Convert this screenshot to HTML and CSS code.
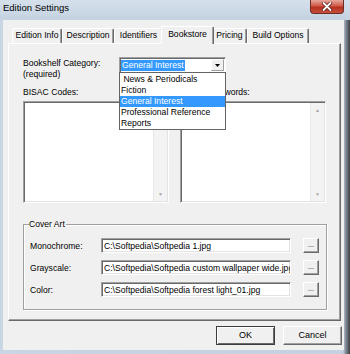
FILE: index.html
```html
<!DOCTYPE html>
<html lang="en">
<head>
    <meta charset="UTF-8">
    <title>Edition Settings</title>
    <link rel="stylesheet" href="styles.css">
</head>
<body>
    <div class="window">
        <div class="titlebar">
            <span class="title">Edition Settings</span>
            <div class="close-btn">
                <svg width="12" height="9" viewBox="0 0 12 9">
                    <path d="M2.5 1 L9.5 8 M9.5 1 L2.5 8" stroke="#5a1c14" stroke-width="3.4" stroke-linecap="round"/>
                    <path d="M2.5 1 L9.5 8 M9.5 1 L2.5 8" stroke="#fff" stroke-width="1.8" stroke-linecap="round"/>
                </svg>
            </div>
        </div>
        <div class="client">
            <div class="tabs">
                <div class="tab w-edition">Edition Info</div>
                <div class="tab w-desc">Description</div>
                <div class="tab w-ident">Identifiers</div>
                <div class="tab active w-book">Bookstore</div>
                <div class="tab w-pricing">Pricing</div>
                <div class="tab w-build">Build Options</div>
            </div>
            <div class="panel">
                <div class="category-row">
                    <div class="cat-label">Bookshelf Category:<br>(required)</div>
                    <div class="combo">
                        <div class="combo-text"><span class="sel">General Interest</span></div>
                        <div class="combo-btn">
                            <svg width="5" height="3" viewBox="0 0 5 3"><path d="M0 0 H5 L2.5 3 Z" fill="#000"/></svg>
                        </div>
                        <ul class="dropdown">
                            <li>&nbsp;News &amp; Periodicals</li>
                            <li>Fiction</li>
                            <li class="hl">General Interest</li>
                            <li>Professional Reference</li>
                            <li>Reports</li>
                        </ul>
                    </div>
                </div>
                <div class="lists">
                    <div class="list-col">
                        <div class="list-label">BISAC Codes:</div>
                        <div class="listbox">
                            <div class="list-body"></div>
                            <div class="vscroll">
                                <div class="arrow">&#9650;</div>
                                <div class="arrow">&#9660;</div>
                            </div>
                        </div>
                    </div>
                    <div class="list-col">
                        <div class="list-label">Search Keywords:</div>
                        <div class="listbox">
                            <div class="list-body"></div>
                            <div class="vscroll">
                                <div class="arrow">&#9650;</div>
                                <div class="arrow">&#9660;</div>
                            </div>
                        </div>
                    </div>
                </div>
                <fieldset class="cover">
                    <legend>Cover Art</legend>
                    <div class="file-row">
                        <div class="file-label">Monochrome:</div>
                        <div class="textbox">C:\Softpedia\Softpedia 1.jpg</div>
                        <div class="small-btn">...</div>
                    </div>
                    <div class="file-row">
                        <div class="file-label">Grayscale:</div>
                        <div class="textbox">C:\Softpedia\Softpedia custom wallpaper wide.jpg</div>
                        <div class="small-btn">...</div>
                    </div>
                    <div class="file-row">
                        <div class="file-label">Color:</div>
                        <div class="textbox">C:\Softpedia\Softpedia forest light_01.jpg</div>
                        <div class="small-btn">...</div>
                    </div>
                </fieldset>
            </div>
            <div class="dialog-buttons">
                <div class="button default">OK</div>
                <div class="button">Cancel</div>
            </div>
        </div>
    </div>
</body>
</html>
```

FILE: styles.css
```css
body {
    margin: 0;
    width: 350px;
    height: 354px;
    overflow: hidden;
    background: linear-gradient(90deg, #c8d5e3 0, #c3d1e0 343px, #7d8792 346px, #3c4047 350px);
    font-family: "Liberation Sans", Arial, sans-serif;
    font-size: 8.6px;
    color: #000;
}
.window {
    display: flex;
    flex-direction: column;
    height: 354px;
}
.titlebar {
    height: 20px;
    display: flex;
    align-items: flex-start;
    background: linear-gradient(#d5e0eb, #c4d2e1);
}
.title {
    font-size: 9.5px;
    line-height: 11px;
    margin: 2px 0 0 3px;
}
.close-btn {
    margin-left: auto;
    margin-right: 6px;
    width: 34px;
    height: 14px;
    box-sizing: border-box;
    border: 1px solid #6e2b23;
    border-top: none;
    border-radius: 0 0 4px 4px;
    background: linear-gradient(#e6a89c, #cf5a49 45%, #b8301f 55%, #c5503c);
    display: flex;
    justify-content: center;
    align-items: center;
}
.client {
    flex: 1;
    margin: 0 6px 4px 3px;
    padding: 6px 0 0 5px;
    background: #f0f0f0;
}
.tabs {
    display: flex;
    align-items: flex-end;
    height: 17px;
    margin-left: 4px;
    position: relative;
    z-index: 1;
}
.tab {
    height: 15px;
    box-sizing: border-box;
    border-top: 1px solid #fff;
    border-left: 1px solid #fff;
    border-right: 1px solid #696969;
    box-shadow: inset -1px 0 #a0a0a0;
    border-radius: 2px 2px 0 0;
    background: #f0f0f0;
    text-align: center;
    line-height: 13px;
}
.tab.active {
    height: 18px;
    margin: 0 -2px -1px;
    line-height: 15px;
    position: relative;
    z-index: 2;
}
.w-edition { width: 50px; }
.w-desc { width: 52px; }
.w-ident { width: 49px; }
.w-book { width: 53px; }
.w-pricing { width: 35px; }
.w-build { width: 62px; }
.panel {
    width: 333px;
    height: 278px;
    box-sizing: border-box;
    border-top: 1px solid #fff;
    border-left: 1px solid #fff;
    border-right: 1px solid #696969;
    border-bottom: 1px solid #696969;
    box-shadow: inset -1px -1px #a0a0a0;
    padding: 13px 0 0 14px;
}
.category-row {
    display: flex;
    height: 23px;
}
.cat-label {
    width: 96px;
    padding-top: 1px;
    line-height: 11px;
}
.combo {
    position: relative;
    width: 107px;
    height: 16px;
    box-sizing: border-box;
    display: flex;
    background: #fff;
    border: 1px solid;
    border-color: #a0a0a0 #fff #fff #a0a0a0;
    box-shadow: inset 1px 1px #696969;
}
.combo-text {
    flex: 1;
    padding: 2px 0 0 1px;
    line-height: 11px;
}
.sel {
    display: inline-block;
    background: #3399ff;
    color: #fff;
    padding: 0 1px;
}
.combo-btn {
    width: 13px;
    height: 12px;
    margin: 1px 1px 0 0;
    box-sizing: border-box;
    background: #f0f0f0;
    border: 1px solid;
    border-color: #fff #a0a0a0 #a0a0a0 #fff;
    display: flex;
    justify-content: center;
    align-items: center;
}
.dropdown {
    position: absolute;
    top: 14px;
    left: -1px;
    width: 107px;
    height: 58px;
    box-sizing: border-box;
    margin: 0;
    padding: 1px 0 0;
    list-style: none;
    background: #fff;
    border: 1px solid #646464;
    z-index: 5;
}
.dropdown li {
    line-height: 11px;
    height: 11px;
    padding-left: 1px;
    white-space: nowrap;
}
.dropdown li.hl {
    background: #3399ff;
    color: #fff;
}
.lists {
    display: flex;
    gap: 11px;
    margin-top: 7px;
}
.list-col {
    width: 146px;
}
.list-label {
    line-height: 11px;
    margin-bottom: 3px;
}
.listbox {
    height: 102px;
    box-sizing: border-box;
    display: flex;
    background: #fff;
    border: 1px solid;
    border-color: #a0a0a0 #fff #fff #a0a0a0;
    box-shadow: inset 1px 1px #696969, inset -1px -1px #e3e3e3;
    padding: 1px 1px 1px 1px;
}
.list-body {
    flex: 1;
}
.vscroll {
    width: 13px;
    background: #f3f3f3;
    border-left: 1px solid #e8e8e8;
    display: flex;
    flex-direction: column;
    justify-content: space-between;
}
.arrow {
    height: 14px;
    line-height: 14px;
    text-align: center;
    font-size: 5px;
    color: #a6a6a6;
}
.cover {
    width: 304px;
    height: 91px;
    box-sizing: border-box;
    margin: 16px 0 0;
    padding: 8px 0 0 5px;
    border: 1px solid #a0a0a0;
    box-shadow: inset 1px 1px #fff, 1px 1px 0 #fff;
    min-width: 0;
}
.cover legend {
    padding: 0 1px 0 0;
    line-height: 11px;
}
.file-row {
    display: flex;
    align-items: center;
    height: 15px;
    margin-bottom: 7px;
    margin-left: 1px;
}
.file-label {
    width: 71px;
}
.textbox {
    width: 190px;
    height: 15px;
    box-sizing: border-box;
    background: #fff;
    border: 1px solid;
    border-color: #a0a0a0 #fff #fff #a0a0a0;
    box-shadow: inset 1px 1px #696969, inset -1px -1px #e3e3e3;
    padding: 2px 0 0 2px;
    line-height: 11px;
    white-space: nowrap;
    overflow: hidden;
}
.small-btn {
    width: 16px;
    height: 15px;
    margin-left: 12px;
    box-sizing: border-box;
    border: 1px solid;
    border-color: #fff #696969 #696969 #fff;
    box-shadow: inset -1px -1px #a0a0a0;
    text-align: center;
    line-height: 11px;
    font-size: 7px;
}
.dialog-buttons {
    display: flex;
    justify-content: flex-end;
    gap: 8px;
    margin: 5px 2px 0 0;
}
.button {
    width: 59px;
    height: 19px;
    box-sizing: border-box;
    border: 1px solid;
    border-color: #fff #696969 #696969 #fff;
    box-shadow: inset -1px -1px #a0a0a0;
    text-align: center;
    line-height: 17px;
    font-size: 9px;
}
.button.default {
    border-color: #3c3c3c;
    box-shadow: inset 1px 1px #fff, inset -1px -1px #696969;
}
```
